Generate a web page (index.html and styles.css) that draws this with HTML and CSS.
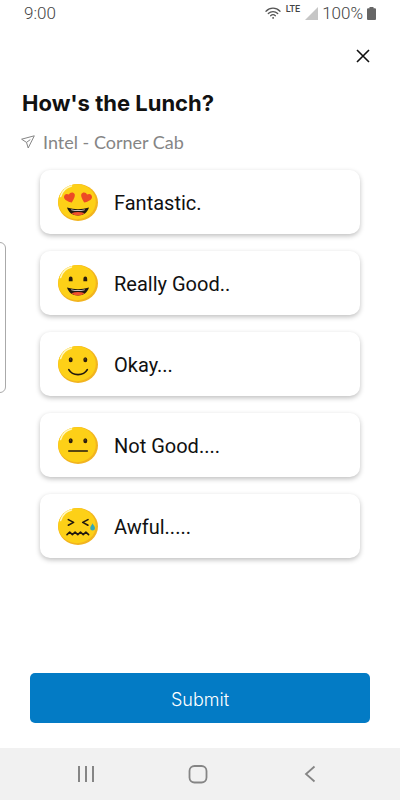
FILE: index.html
```
<!DOCTYPE html>
<html lang="en">
<head>
    <meta charset="UTF-8">
    <meta name="viewport" content="width=device-width, initial-scale=1.0">
    <title>How's the Lunch?</title>
    <link rel="stylesheet" href="styles.css">
</head>
<body>
    <!-- shared face used by every rating icon -->
    <svg class="sprite" width="0" height="0" aria-hidden="true">
        <symbol id="face" viewBox="0 0 40 37">
            <ellipse cx="20" cy="18.5" rx="20" ry="18.5" fill="#f2b41f"/>
            <ellipse cx="19" cy="17.7" rx="18.8" ry="17.5" fill="#fdd017"/>
            <path d="M2.6 12.5C4 7.5 8 3.5 13.5 2" fill="none" stroke="#fff6bf" stroke-width="1.5" stroke-linecap="round"/>
        </symbol>
        <symbol id="eyes" viewBox="0 0 40 37">
            <ellipse cx="12.7" cy="13.8" rx="2" ry="2.5" fill="#2b1d0e"/>
            <ellipse cx="27.3" cy="13.8" rx="2" ry="2.5" fill="#2b1d0e"/>
            <circle cx="12.5" cy="13" r=".6" fill="#8a6a2a"/>
            <circle cx="27.1" cy="13" r=".6" fill="#8a6a2a"/>
        </symbol>
        <symbol id="grin" viewBox="0 0 40 37">
            <path d="M9 22.5Q20 26 31 22.5C29.5 27.5 25.5 30.5 20 30.5S10.5 27.5 9 22.5Z" fill="#22190f"/>
            <path d="M13 24.6Q20 26 27 24.6L26.5 25.3Q20 26.6 13.5 25.3Z" fill="#fff"/>
            <path d="M13.3 28.3Q20 25.500 26.7 28.3Q23.800 30.500 20 30.500T13.300 28.300Z" fill="#f0512c"/>
        </symbol>
    </svg>

    <header class="status-bar">
        <span class="clock">9:00</span>
        <div class="status-icons">
            <svg class="wifi" width="16" height="12" viewBox="0 0 16 12" fill="none" stroke="#555" stroke-width="1.3" stroke-linecap="round">
                <path d="M1 4.2C5 .1 11 .1 15 4.2M3.3 6.5C6 3.9 10 3.9 12.7 6.5M5.6 8.7C7 7.5 9 7.5 10.4 8.7"/>
                <circle cx="8" cy="10.9" r=".5" fill="#555" stroke-width=".7"/>
            </svg>
            <span class="network">LTE</span>
            <svg width="13" height="13" viewBox="0 0 13 13">
                <path d="M13 0V13H0Z" fill="#c6c6c6"/>
            </svg>
            <span class="battery-level">100%</span>
            <svg width="9" height="13" viewBox="0 0 9 13">
                <path d="M2.5 0H6.5V1.3H8.3L9 2V12.3L8.3 13H.7L0 12.3V2L.7 1.3H2.5Z" fill="#666"/>
            </svg>
        </div>
    </header>

    <main class="survey">
        <div class="side-handle"></div>

        <div class="close-row">
            <button class="close-btn" type="button" aria-label="Close">
                <svg width="14" height="14" viewBox="0 0 14 14">
                    <path d="M1 1L13 13M13 1L1 13" stroke="#111" stroke-width="1.6"/>
                </svg>
            </button>
        </div>

        <h1 class="title">How's the Lunch?</h1>
        <p class="location">
            <svg width="14" height="14" viewBox="0 0 14 14" fill="none" stroke="#858585" stroke-linejoin="round">
                <path d="M.6 4.2L13.3.8L7.2 13L5.5 7.4ZM5.5 7.4L9.3 4.6"/>
            </svg>
            <span>Intel - Corner Cab</span>
        </p>

        <div class="options">
            <button class="option" type="button">
                <svg class="emoji" viewBox="0 0 40 37" aria-hidden="true">
                    <use href="#face"/>
                    <path d="M13.8 18.6C11 17.6 6.600 16.400 6 13.400C5.700 10.700 8.400 8.800 11 10.600C11.600 8 15.600 7.600 16.700 10.200C17.400 12.600 15.200 15.800 13.800 18.600Z" fill="#ed4a25"/>
                    <path d="M26.200 18.600C29 17.600 33.400 16.400 34 13.400C34.300 10.700 31.600 8.800 29 10.600C28.400 8 24.400 7.600 23.300 10.200C22.600 12.600 24.800 15.800 26.200 18.600Z" fill="#ed4a25"/>
                    <use href="#grin" y="1"/>
                </svg>
                <span>Fantastic.</span>
            </button>
            <button class="option" type="button">
                <svg class="emoji" viewBox="0 0 40 37" aria-hidden="true">
                    <use href="#face"/>
                    <path d="M10.800 16.300V13.700Q10.800 11.500 12.700 11.500T14.600 13.700V16.300ZM25.400 16.300V13.700Q25.400 11.500 27.300 11.500T29.200 13.700V16.300Z" fill="#2b1d0e"/>
                    <use href="#grin"/>
                </svg>
                <span>Really Good..</span>
            </button>
            <button class="option" type="button">
                <svg class="emoji" viewBox="0 0 40 37" aria-hidden="true">
                    <use href="#face"/>
                    <use href="#eyes"/>
                    <path d="M10.8 23.7C14.5 30.3 25.5 30.3 29.3 23.7" fill="none" stroke="#22190f" stroke-width="1.7" stroke-linecap="round"/>
                </svg>
                <span>Okay...</span>
            </button>
            <button class="option" type="button">
                <svg class="emoji" viewBox="0 0 40 37" aria-hidden="true">
                    <use href="#face"/>
                    <use href="#eyes"/>
                    <path d="M10.8 24H29.3" stroke="#22190f" stroke-width="1.6" stroke-linecap="round"/>
                </svg>
                <span>Not Good....</span>
            </button>
            <button class="option" type="button">
                <svg class="emoji" viewBox="0 0 40 37" aria-hidden="true">
                    <use href="#face"/>
                    <g fill="none" stroke="#22190f" stroke-width="1.6" stroke-linecap="round" stroke-linejoin="round">
                        <path d="M10.3 11.6L15.6 14.4L10.3 17.2M30 11.6L24.7 14.4L30 17.2"/>
                        <path d="M9 26.7L11.7 24.2L14.4 26.7L17.1 24.2L19.8 26.7L22.5 24.2L25.2 26.7L27.9 24.2L30.6 26.7"/>
                    </g>
                    <path d="M34.5 15.2C35.5 17.2 37 18.5 37 20.2A2.4 2.3 0 0 1 32.2 20.2C32.2 18.5 33.7 17.2 34.5 15.2Z" fill="#35a8b5"/>
                </svg>
                <span>Awful.....</span>
            </button>
        </div>

        <button class="submit-btn" type="submit">Submit</button>
    </main>

    <nav class="nav-bar">
        <button class="nav-btn" type="button" aria-label="Recent apps">
            <svg width="20" height="20" viewBox="0 0 20 20" stroke="#858585" stroke-width="2">
                <path d="M3 2V18M10 2V18M17 2V18"/>
            </svg>
        </button>
        <button class="nav-btn" type="button" aria-label="Home">
            <svg width="20" height="20" viewBox="0 0 20 20" fill="none" stroke="#858585" stroke-width="1.8">
                <rect x="1.5" y="2" width="17" height="16.5" rx="5"/>
            </svg>
        </button>
        <button class="nav-btn" type="button" aria-label="Back">
            <svg width="20" height="20" viewBox="0 0 20 20" fill="none" stroke="#858585" stroke-width="1.8">
                <path d="M14.5 2.5L6 10L14.5 17.5"/>
            </svg>
        </button>
    </nav>
</body>
</html>
```
FILE: styles.css
```
* {
    margin: 0;
    padding: 0;
    box-sizing: border-box;
}

body {
    font-family: Roboto, sans-serif;
    background: #fff;
    color: #111;
    min-height: 100vh;
    display: flex;
    flex-direction: column;
}

button {
    font-family: inherit;
    border: none;
    background: none;
    cursor: pointer;
}

svg {
    display: block;
    flex-shrink: 0;
}

.sprite {
    position: absolute;
}

.status-bar {
    display: flex;
    align-items: center;
    justify-content: space-between;
    height: 26px;
    padding: 0 24px;
    font-size: 17px;
    font-weight: 300;
    color: #444;
}

.status-icons {
    display: flex;
    align-items: center;
    gap: 4px;
}

.network {
    font-size: 9px;
    font-weight: 500;
    line-height: 10px;
    padding: 0 1px 8px;
}

.survey {
    position: relative;
    flex: 1;
    display: flex;
    flex-direction: column;
}

/* edge panel handle, sits over the left side of the screen */
.side-handle {
    position: absolute;
    left: -10px;
    top: 216px;
    width: 16px;
    height: 151px;
    border: 1px solid #aaa;
    border-radius: 6px;
}

.close-row {
    display: flex;
    justify-content: flex-end;
    padding: 18px 25px 16px;
}

.close-btn {
    padding: 5px;
}

.title {
    padding: 0 22px;
    margin-top: 5px;
    font-family: Inter, sans-serif;
    font-size: 22px;
    font-weight: 700;
    line-height: 28px;
}

.location {
    display: flex;
    align-items: center;
    gap: 8px;
    padding: 0 21px;
    margin-top: 13px;
    font-family: Lato, sans-serif;
    font-size: 18px;
    line-height: 24px;
    color: #858585;
}

.options {
    display: flex;
    flex-direction: column;
    gap: 17px;
    padding: 16px 40px;
}

.option {
    display: flex;
    align-items: center;
    gap: 16px;
    height: 64px;
    padding: 0 18px;
    font-size: 20px;
    line-height: 26px;
    color: #111;
    text-align: left;
    background: #fff;
    border-radius: 10px;
    box-shadow: 0 2px 5px rgba(0, 0, 0, 0.25);
}

.option span {
    padding-top: 2px;
}

.emoji {
    width: 40px;
    height: 37px;
}

.submit-btn {
    height: 50px;
    margin: auto 30px 25px;
    padding-top: 2px;
    font-family: Inter, sans-serif;
    font-size: 18px;
    font-weight: 300;
    color: #fff;
    background: #037bc5;
    border-radius: 5px;
}

.nav-bar {
    display: flex;
    justify-content: space-between;
    align-items: center;
    height: 52px;
    padding: 0 76px 0 72px;
    background: #f1f1f1;
}

.nav-btn {
    padding: 4px;
}
```
